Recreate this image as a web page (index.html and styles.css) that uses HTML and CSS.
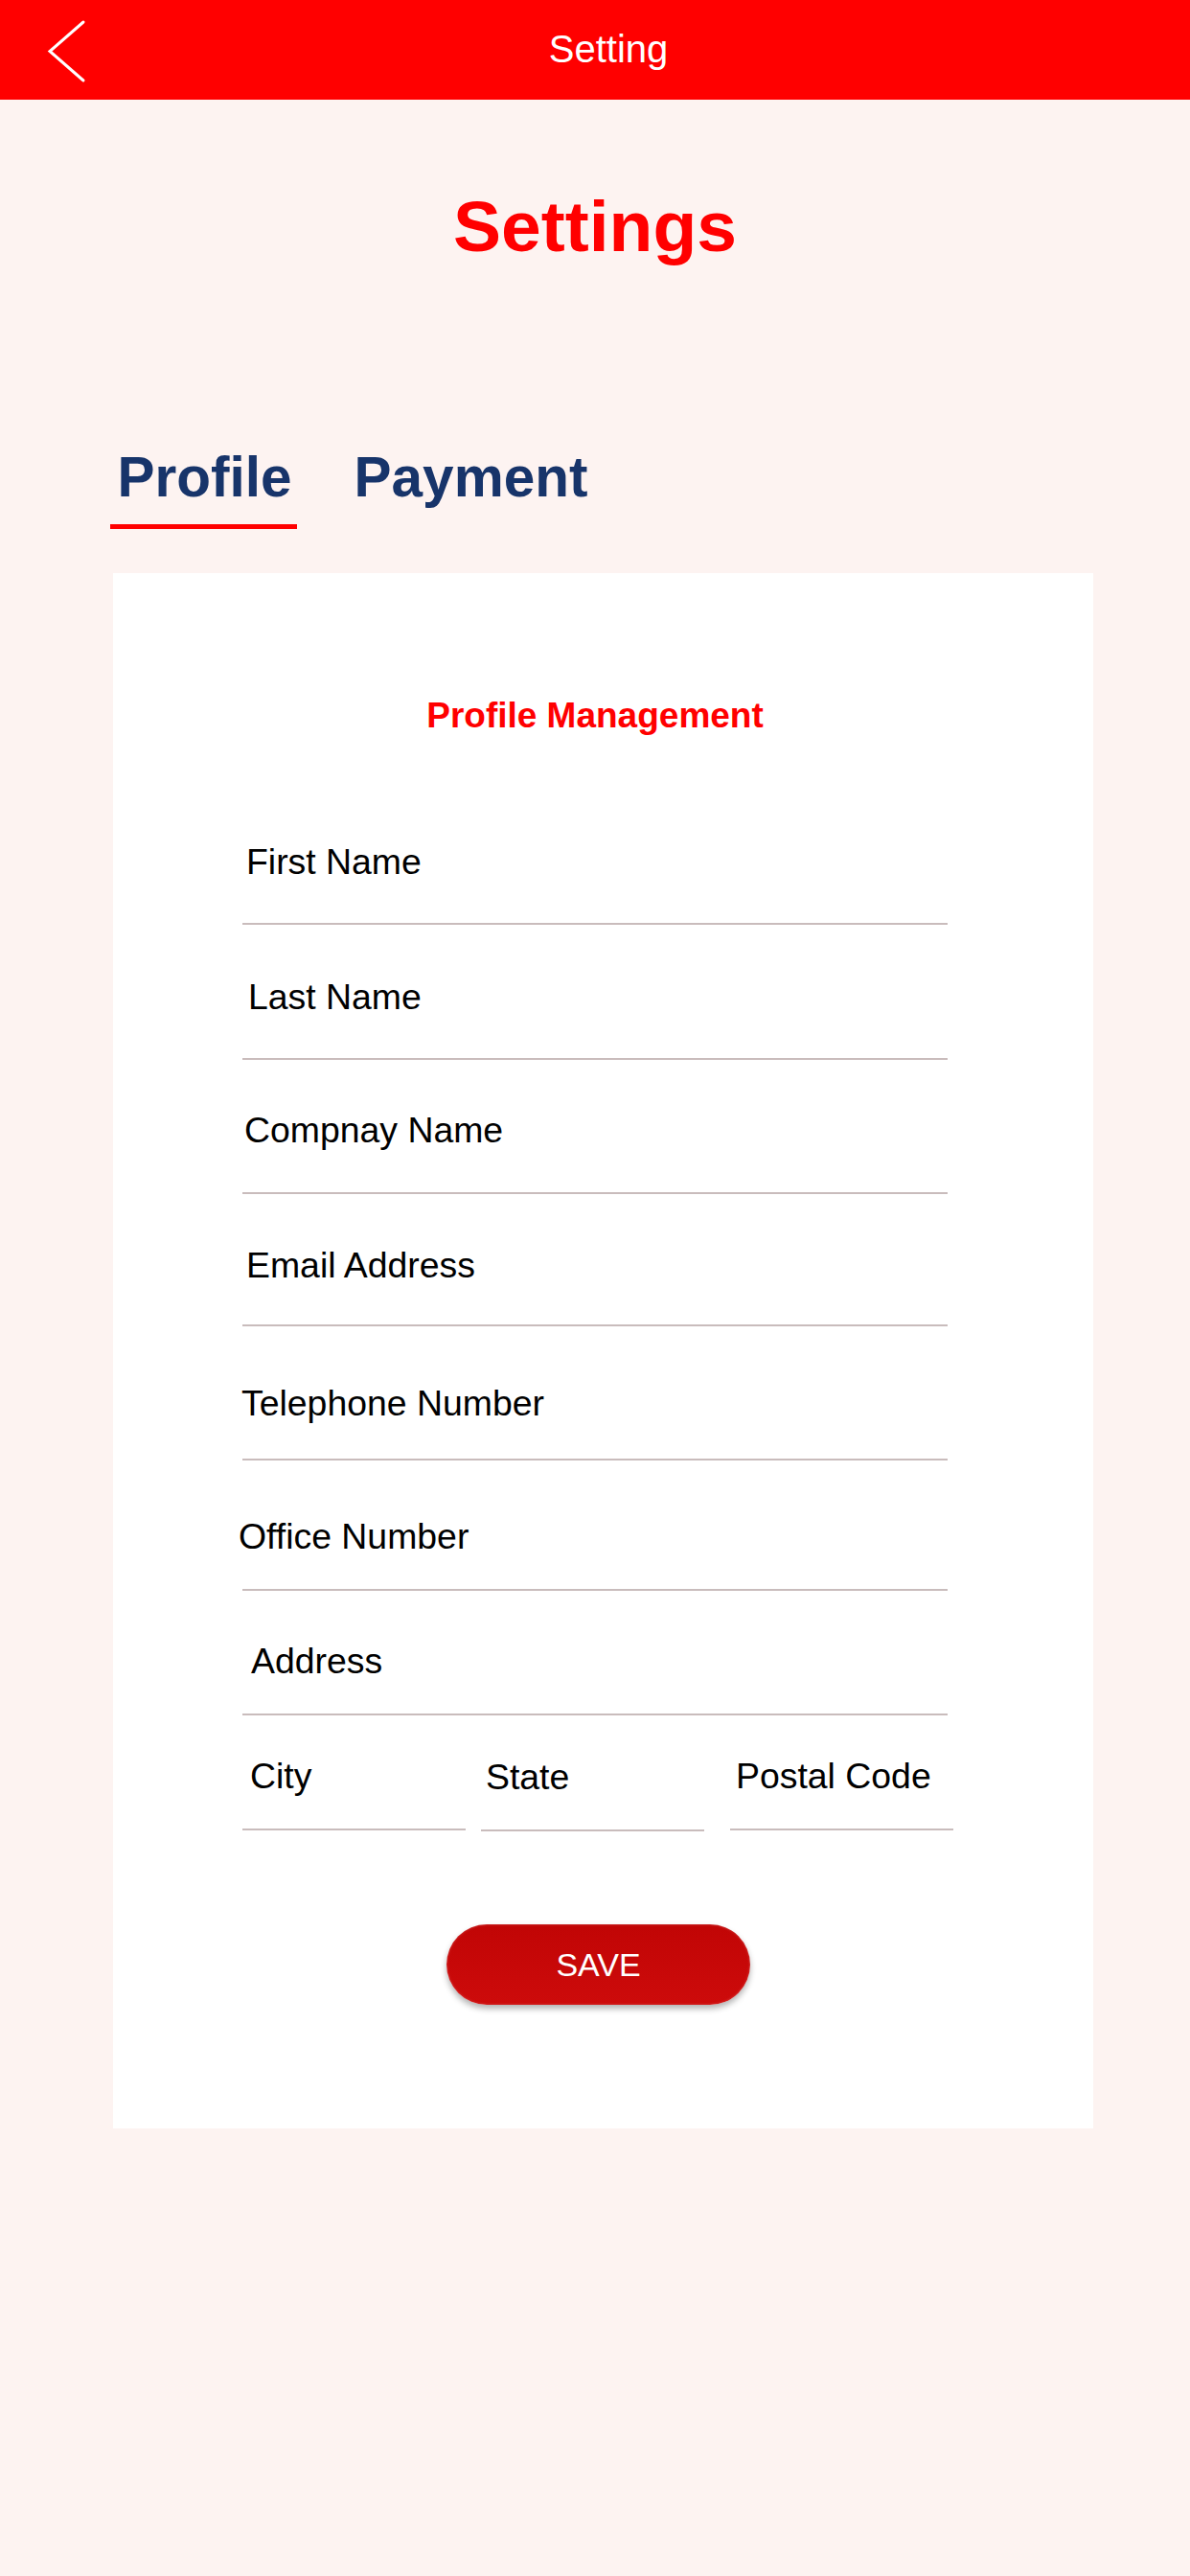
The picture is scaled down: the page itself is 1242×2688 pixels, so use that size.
FILE: index.html
```html
<!DOCTYPE html>
<html lang="en">
<head>
<meta charset="utf-8">
<title>Setting</title>
<link rel="stylesheet" href="styles.css">
</head>
<body>
<header class="topbar">
  <div class="back">
    <svg width="104" height="104" viewBox="0 0 104 104" aria-hidden="true">
      <polyline points="87,23 52,53.5 87,84" fill="none" stroke="#ffffff" stroke-width="3" stroke-linecap="round" stroke-linejoin="miter"/>
    </svg>
  </div>
  <div class="topbar-title">Setting</div>
  <div class="topbar-spacer"></div>
</header>

<main class="page">
  <h1 class="page-title">Settings</h1>

  <nav class="tabs">
    <div class="tab tab-active">Profile</div>
    <div class="tab">Payment</div>
  </nav>

  <section class="card">
    <div class="form">
      <h2 class="form-title">Profile Management</h2>

      <div class="field f1"><span class="label">First Name</span></div>
      <div class="field f2"><span class="label">Last Name</span></div>
      <div class="field f3"><span class="label">Compnay Name</span></div>
      <div class="field f4"><span class="label">Email Address</span></div>
      <div class="field f5"><span class="label">Telephone Number</span></div>
      <div class="field f6"><span class="label">Office Number</span></div>
      <div class="field f7"><span class="label">Address</span></div>

      <div class="row">
        <div class="field cell c-city"><span class="label">City</span></div>
        <div class="field cell c-state"><span class="label">State</span></div>
        <div class="field cell c-postal"><span class="label">Postal Code</span></div>
      </div>

      <button class="save" type="button">SAVE</button>
    </div>
  </section>
</main>
</body>
</html>
```

FILE: styles.css
```css
* {
  box-sizing: border-box;
}

html, body {
  margin: 0;
  padding: 0;
}

body {
  width: 1242px;
  min-height: 2688px;
  background: #fdf3f1;
  font-family: "Liberation Sans", Arial, sans-serif;
  color: #000;
}

.topbar {
  height: 104px;
  background: #ff0000;
  display: flex;
  align-items: center;
}

.back {
  width: 104px;
  height: 104px;
  flex: none;
}

.back svg {
  display: block;
}

.topbar-title {
  flex: 1;
  text-align: center;
  color: #ffffff;
  font-size: 40px;
  line-height: 40px;
  padding-bottom: 2px;
}

.topbar-spacer {
  width: 76px;
  flex: none;
}

.page {
  padding: 0 0 0 118px;
}

.page-title {
  margin: 95px 0 0 -118px;
  text-align: center;
  color: #ff0000;
  font-size: 75px;
  line-height: 75px;
  font-weight: bold;
}

.tabs {
  margin-top: 195px;
  margin-left: -3px;
  display: flex;
  gap: 52px;
}

.tab {
  font-size: 58.5px;
  line-height: 58.5px;
  font-weight: bold;
  color: #17346a;
  padding: 0 5.5px 19px 7.5px;
  border-bottom: 5px solid transparent;
}

.tab-active {
  border-bottom-color: #ff0000;
}

.card {
  margin-top: 46px;
  width: 1023px;
  background: #ffffff;
  padding: 130px 0 129px 135px;
}

.form {
  width: 736px;
}

.form-title {
  margin: 0 0 60px 0;
  text-align: center;
  color: #ff0000;
  font-size: 37px;
  line-height: 37px;
  font-weight: bold;
}

.field {
  border-bottom: 2px solid #c9bcbc;
}

.label {
  display: block;
  font-size: 37.4px;
  line-height: 37px;
  white-space: nowrap;
}

.f1 { padding: 56px 0 45px 4px; }
.f2 { padding: 57px 0 45px 6px; }
.f3 { padding: 55px 0 46px 2px; }
.f4 { padding: 56px 0 43px 4px; }
.f5 { padding: 62px 0 39px 0; }
.f5 .label { margin-left: -1px; }
.f6 { padding: 61px 0 36px 0; }
.f6 .label { margin-left: -4px; }
.f7 { padding: 55px 0 36px 9px; }

.row {
  display: flex;
  align-items: flex-start;
  width: 742px;
}

.cell {
  width: 233px;
  flex: none;
}

.c-city { padding: 45px 0 36px 8px; }
.c-state { margin-left: 16px; padding: 46px 0 36px 5px; }
.c-postal { margin-left: 27px; padding: 45px 0 36px 6px; }

.save {
  display: block;
  margin: 97px 0 0 213px;
  width: 317px;
  height: 84px;
  border: none;
  border-radius: 42px;
  background: linear-gradient(#c10505, #cd0b0b);
  box-shadow: 0 4px 6px rgba(0, 0, 0, 0.3), inset 0 0 3px rgba(255, 255, 255, 0.25);
  color: #ffffff;
  font-family: "Liberation Sans", Arial, sans-serif;
  font-size: 34px;
  line-height: 34px;
  padding: 0;
}
```
